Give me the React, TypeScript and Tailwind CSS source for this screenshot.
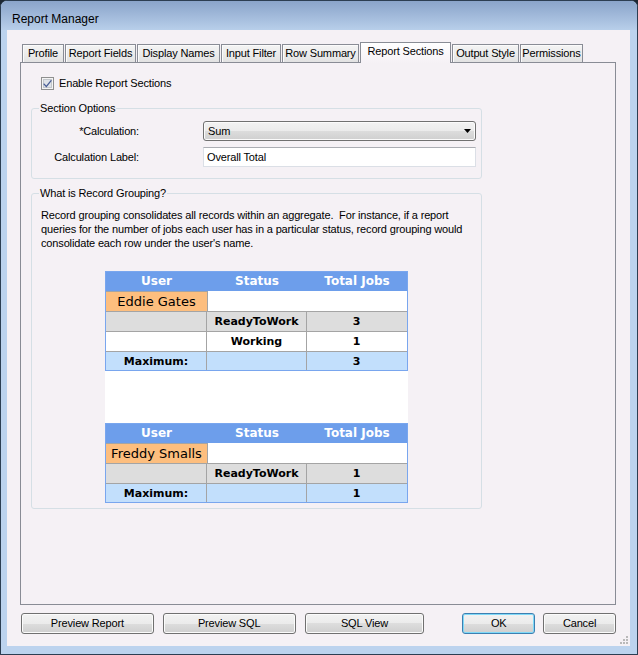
const tabs = [
  { label: "Profile", w: "w-[42px]" },
  { label: "Report Fields", w: "w-[71px]" },
  { label: "Display Names", w: "w-[83px]" },
  { label: "Input Filter", w: "w-[60px]" },
  { label: "Row Summary", w: "w-[77px]" },
  { label: "Report Sections", w: "w-[91px]", active: true },
  { label: "Output Style", w: "w-[67px]" },
  { label: "Permissions", w: "w-[63px]" },
];

function Tab({ label, w, active }: { label: string; w: string; active?: boolean }) {
  if (active) {
    return (
      <div
        className={`${w} h-[21px] -mb-[1px] relative z-10 border border-b-0 border-[#898c95] bg-gradient-to-b from-white to-[#f5f1f5] flex justify-center pt-[2px]`}
      >
        {label}
      </div>
    );
  }
  return (
    <div
      className={`${w} h-[18px] border border-b-0 border-[#898c95] bg-[linear-gradient(#f4f4f4_0%,#ececec_50%,#e2e2e2_100%)] shadow-[inset_1px_1px_0_#fbfbfb] flex items-center justify-center`}
    >
      {label}
    </div>
  );
}

function CheckBox() {
  return (
    <svg width="13" height="13" viewBox="0 0 13 13">
      <rect x="0.5" y="0.5" width="12" height="12" fill="#f4f4f4" stroke="#8e8f8f" />
      <rect x="2.5" y="2.5" width="8" height="8" fill="#dfe3e8" stroke="#c3c7cc" />
      <path d="M3 6.2 L5.3 8.6 L10 2.8 L10.8 3.8 L5.4 10.6 L2.3 7.3 Z" fill="#4a5f97" />
    </svg>
  );
}

function Button({ label, w, primary }: { label: string; w: string; primary?: boolean }) {
  return (
    <div
      className={`${w} h-[21px] rounded-[3px] border flex items-center justify-center bg-[linear-gradient(#f2f2f2_0%,#ebebeb_50%,#dddddd_50%,#cfcfcf_100%)] ${
        primary
          ? "border-[#3c7fb1] shadow-[inset_0_0_0_1px_#7fd9f8]"
          : "border-[#707070] shadow-[inset_0_0_0_1px_#fbfbfb]"
      }`}
    >
      {label}
    </div>
  );
}

type Row = { status: string; total: string; gray?: boolean };

function GroupTable({ name, rows, max }: { name: string; rows: Row[]; max: string }) {
  return (
    <div className="w-[303px] border border-[#79a6ee] font-['DejaVu_Sans',Verdana,sans-serif] text-[11px] font-bold tracking-normal">
      <div className="flex h-[19px] bg-[#6d9eeb] text-white text-[12px] items-center">
        <div className="w-[101px] text-center">User</div>
        <div className="w-[100px] text-center">Status</div>
        <div className="w-[100px] text-center">Total Jobs</div>
      </div>
      <div className="flex h-[20px] bg-white">
        <div className="w-[102px] bg-[#fdbe7e] border-t border-r border-[#a4a4a4] flex items-center justify-center font-normal text-[13px]">
          {name}
        </div>
        <div className="flex-1" />
      </div>
      {rows.map((r) => (
        <div
          key={r.status}
          className={`flex h-[20px] border-t border-[#a4a4a4] ${r.gray ? "bg-[#dddddd]" : "bg-white"}`}
        >
          <div className="w-[101px] border-r border-[#a4a4a4]" />
          <div className="w-[100px] border-r border-[#a4a4a4] flex items-center justify-center">{r.status}</div>
          <div className="w-[99px] flex items-center justify-center">{r.total}</div>
        </div>
      ))}
      <div className="flex h-[19px] border-t border-[#a4a4a4] bg-[#c2dffc]">
        <div className="w-[101px] border-r border-[#a4a4a4] flex items-center justify-center">Maximum:</div>
        <div className="w-[100px] border-r border-[#a4a4a4]" />
        <div className="w-[99px] flex items-center justify-center">{max}</div>
      </div>
    </div>
  );
}

export default function App() {
  return (
    <div className="w-[638px] h-[655px] bg-[#1d2733] font-['Liberation_Sans',Arial,sans-serif] text-[11px] text-black leading-[13px] tracking-[-0.15px]">
      <div className="w-full h-full rounded-t-[7px] border border-[#2c3e52] bg-[#bcd3ee] flex flex-col overflow-hidden">
        <div className="h-[29px] shrink-0 bg-gradient-to-b from-[#8aa4ca] to-[#b8cfea] pl-[11px] pt-[11px] text-[12px] leading-[14px] tracking-normal">
          Report Manager
        </div>
        <div className="relative ml-[6px] mr-[7px] h-[616px] bg-[#f5f1f5] flex flex-col pl-[13px] pr-[14px] pt-[12px]">
          <div className="flex items-end h-[20px] pl-[2px] gap-[1px]">
            {tabs.map((t) => (
              <Tab key={t.label} {...t} />
            ))}
          </div>

          <div className="h-[543px] border border-[#898c95] bg-[#f5f1f5] pt-[14px] pl-[10px]">
            <div className="flex items-center h-[13px] ml-[10px] gap-[5px]">
              <CheckBox />
              <span>Enable Report Sections</span>
            </div>

            <fieldset className="mt-[12px] w-[451px] border border-[#d5dfe5] rounded-[3px] pb-[11px]">
              <legend className="ml-[7px] px-[1px] leading-[13px]">Section Options</legend>
              <div className="pt-[6px] flex flex-col gap-[6px]">
                <div className="flex items-center">
                  <div className="w-[107px] text-right">*Calculation:</div>
                  <div className="ml-[64px] w-[273px] h-[20px] rounded-[3px] border border-[#707070] bg-[linear-gradient(#f2f2f2_0%,#ebebeb_50%,#dddddd_50%,#cfcfcf_100%)] shadow-[inset_0_0_0_1px_#fbfbfb] flex items-center pl-[4px] pr-[4px]">
                    <span>Sum</span>
                    <svg className="ml-auto" width="7" height="4" viewBox="0 0 7 4">
                      <path d="M0 0 H7 L3.5 4 Z" fill="#000" />
                    </svg>
                  </div>
                </div>
                <div className="flex items-center">
                  <div className="w-[107px] text-right">Calculation Label:</div>
                  <div className="ml-[64px] w-[273px] h-[20px] bg-white border border-[#dbdfe6] border-t-[#abadb3] flex items-center pl-[3px]">
                    Overall Total
                  </div>
                </div>
              </div>
            </fieldset>

            <fieldset className="mt-[8px] w-[451px] border border-[#d5dfe5] rounded-[3px] pb-[5px]">
              <legend className="ml-[7px] px-[1px] leading-[13px]">What is Record Grouping?</legend>
              <div className="pt-[8px] pl-[9px] leading-[14px] whitespace-pre">
                <div>Record grouping consolidates all records within an aggregate.  For instance, if a report</div>
                <div>queries for the number of jobs each user has in a particular status, record grouping would</div>
                <div>consolidate each row under the user's name.</div>
              </div>
              <div className="mt-[21px] flex justify-center">
                <div className="w-[303px] bg-white flex flex-col">
                  <GroupTable
                    name="Eddie Gates"
                    rows={[
                      { status: "ReadyToWork", total: "3", gray: true },
                      { status: "Working", total: "1" },
                    ]}
                    max="3"
                  />
                  <div className="h-[52px]" />
                  <GroupTable
                    name="Freddy Smalls"
                    rows={[{ status: "ReadyToWork", total: "1", gray: true }]}
                    max="1"
                  />
                </div>
              </div>
            </fieldset>
          </div>

          <div className="mt-[8px] flex pl-[1px]">
            <Button label="Preview Report" w="w-[133px]" />
            <div className="w-[9px]" />
            <Button label="Preview SQL" w="w-[133px]" />
            <div className="w-[9px]" />
            <Button label="SQL View" w="w-[120px]" />
            <div className="w-[38px]" />
            <Button label="OK" w="w-[73px]" primary />
            <div className="w-[8px]" />
            <Button label="Cancel" w="w-[73px]" />
          </div>

          <svg className="absolute right-[1px] bottom-[1px]" width="10" height="10" viewBox="0 0 10 10">
            <g fill="#b9b9b9">
              <rect x="7" y="1" width="2" height="2" />
              <rect x="4" y="4" width="2" height="2" />
              <rect x="7" y="4" width="2" height="2" />
              <rect x="1" y="7" width="2" height="2" />
              <rect x="4" y="7" width="2" height="2" />
              <rect x="7" y="7" width="2" height="2" />
            </g>
          </svg>
        </div>
      </div>
    </div>
  );
}
